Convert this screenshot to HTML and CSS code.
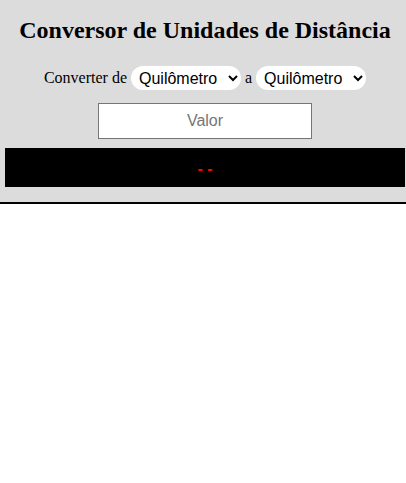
FILE: index.html
```html
<!DOCTYPE html>
<html lang="pt">
<head>
<meta charset="utf-8">
<title>Conversor de Unidades de Distância</title>
<link rel="stylesheet" href="styles.css">
</head>
<body>
<div class="header">
  <h1 class="title">Conversor de Unidades de Distância</h1>
  <div class="row">
    <span class="label">Converter de</span>
    <select class="unit">
      <option>Quilômetro</option>
      <option>Metro</option>
      <option>Centímetro</option>
    </select>
    <span class="label">a</span>
    <select class="unit">
      <option>Quilômetro</option>
      <option>Metro</option>
      <option>Centímetro</option>
    </select>
  </div>
  <input class="value" type="text" placeholder="Valor">
  <div class="result"><span>- -</span></div>
</div>
</body>
</html>
```
FILE: styles.css
```css
html, body {
  margin: 0;
  padding: 0;
  background: #fff;
  font-family: "Liberation Serif", "Times New Roman", serif;
}
.header {
  background: #dcdcdc;
  border-bottom: 2px solid #000;
  display: flex;
  flex-direction: column;
  align-items: center;
  padding: 16px 0 15px 4px;
}
.title {
  margin: 0;
  font-size: 24px;
  line-height: 28px;
  font-weight: bold;
  color: #000;
  text-align: center;
}
.row {
  margin-top: 22px;
  height: 24px;
  display: flex;
  align-items: center;
  justify-content: center;
  gap: 4px;
  font-size: 16px;
}
.label {
  color: #000;
}
.unit {
  width: 110px;
  height: 24px;
  border: none;
  border-radius: 12px;
  background: #fff;
  font-family: "Liberation Sans", Arial, sans-serif;
  font-size: 16px;
  color: #000;
  padding: 0 4px;
}
.value {
  margin-top: 13px;
  box-sizing: border-box;
  width: 214px;
  height: 36px;
  border: 1px solid #767676;
  background: #fff;
  font-family: "Liberation Sans", Arial, sans-serif;
  font-size: 16px;
  text-align: center;
  padding: 0;
}
.value::placeholder {
  color: #757575;
}
.result {
  margin-top: 9px;
  align-self: flex-start;
  margin-left: 1px;
  width: 400px;
  height: 39px;
  background: #000;
  display: flex;
  align-items: center;
  justify-content: center;
  padding-top: 2px;
  box-sizing: border-box;
  color: #f00;
  font-family: "Liberation Sans", Arial, sans-serif;
  font-size: 16px;
  font-weight: bold;
}
```
